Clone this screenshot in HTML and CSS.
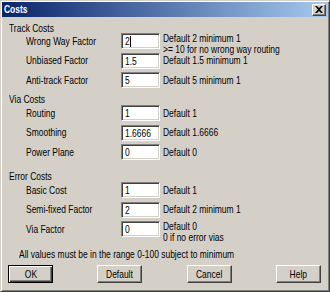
FILE: index.html
```html
<!DOCTYPE html>
<html lang="en">
<head>
	<meta charset="UTF-8">
	<title>Costs</title>
	<link rel="stylesheet" href="styles.css">
</head>
<body>
	<div class="window">
		<div class="titlebar">
			<span class="caption">Costs</span>
			<span class="close">
				<svg width="8" height="7" viewBox="0 0 8 7"><path d="M0 0h2l2 2 2-2h2L5 3.5 8 7H6L4 5 2 7H0l3-3.5z" fill="#000"/></svg>
			</span>
		</div>
		<div class="content">
			<div class="group track">
				<div class="group-title">Track Costs</div>
				<div class="row">
					<span class="label">Wrong Way Factor</span>
					<div class="field"><span class="value">2</span><span class="caret"></span></div>
					<div class="note two">Default 2 minimum 1<br>&gt;= 10 for no wrong way routing</div>
				</div>
				<div class="row">
					<span class="label">Unbiased Factor</span>
					<div class="field"><span class="value">1.5</span></div>
					<div class="note">Default 1.5 minimum 1</div>
				</div>
				<div class="row">
					<span class="label">Anti-track Factor</span>
					<div class="field"><span class="value">5</span></div>
					<div class="note">Default 5 minimum 1</div>
				</div>
			</div>
			<div class="group via">
				<div class="group-title">Via Costs</div>
				<div class="row">
					<span class="label">Routing</span>
					<div class="field"><span class="value">1</span></div>
					<div class="note">Default 1</div>
				</div>
				<div class="row">
					<span class="label">Smoothing</span>
					<div class="field"><span class="value">1.6666</span></div>
					<div class="note">Default 1.6666</div>
				</div>
				<div class="row">
					<span class="label">Power Plane</span>
					<div class="field"><span class="value">0</span></div>
					<div class="note">Default 0</div>
				</div>
			</div>
			<div class="group error">
				<div class="group-title">Error Costs</div>
				<div class="row">
					<span class="label">Basic Cost</span>
					<div class="field"><span class="value">1</span></div>
					<div class="note">Default 1</div>
				</div>
				<div class="row">
					<span class="label">Semi-fixed Factor</span>
					<div class="field"><span class="value">2</span></div>
					<div class="note">Default 2 minimum 1</div>
				</div>
				<div class="row">
					<span class="label">Via Factor</span>
					<div class="field"><span class="value">0</span></div>
					<div class="note two">Default 0<br>0 if no error vias</div>
				</div>
			</div>
			<p class="hint">All values must be in the range 0-100 subject to minimum</p>
			<div class="buttons">
				<button class="btn default-btn"><span>OK</span></button>
				<button class="btn"><span>Default</span></button>
				<button class="btn"><span>Cancel</span></button>
				<button class="btn"><span>Help</span></button>
			</div>
		</div>
	</div>
</body>
</html>
```

FILE: styles.css
```css
* {
	padding: 0;
	margin: 0;
	box-sizing: border-box;
}

body {
	width: 330px;
	height: 292px;
	overflow: hidden;
	font-family: "Liberation Sans", Arial, sans-serif;
	font-size: 11px;
	color: #000;
}

/* the dialog font is narrower than Arial */
.caption, .group-title, .label, .note, .hint, .value, .btn span {
	display: inline-block;
	white-space: nowrap;
	transform: scaleX(0.77);
	transform-origin: 0 50%;
}

.window {
	width: 330px;
	height: 292px;
	background: #d4d0c8;
	border: 1px solid;
	border-color: #d4d0c8 #404040 #404040 #d4d0c8;
	box-shadow: inset 1px 1px #fff, inset -1px -1px #808080;
	padding: 1px;
}

.titlebar {
	height: 15px;
	display: flex;
	align-items: center;
	justify-content: space-between;
	padding: 0 2px 0 2px;
	background: linear-gradient(to right, #0a246a, #a6caf0);
}

.caption {
	color: #fff;
	font-weight: bold;
	line-height: 13px;
}

.close {
	width: 14px;
	height: 12px;
	display: flex;
	align-items: center;
	justify-content: center;
	background: #d4d0c8;
	border: 1px solid;
	border-color: #fff #404040 #404040 #fff;
	box-shadow: inset -1px -1px #808080;
}

.content {
	padding: 6px 7px 0 7px;
}

.group-title {
	display: block;
	height: 11px;
	line-height: 11px;
}

.track .group-title {
	margin-bottom: -1px;
}

.via {
	margin-top: 6px;
}

.error {
	margin-top: 11px;
}

.row {
	display: grid;
	grid-template-columns: 92px 39px auto;
	grid-template-rows: 16px;
	column-gap: 3px;
	height: 16px;
	margin-bottom: 3.5px;
	padding-left: 17px;
	align-items: center;
	line-height: 11px;
}

.row:last-child {
	margin-bottom: 0;
}

.field {
	height: 16px;
	display: flex;
	align-items: flex-start;
	background: #fff;
	border: 1px solid;
	border-color: #808080 #fff #fff #808080;
	box-shadow: inset 1px 1px #404040, inset -1px -1px #d4d0c8;
	padding: 2px 0 0 3px;
	line-height: 11px;
	white-space: nowrap;
}

.caret {
	width: 1px;
	height: 11px;
	margin-left: -1px;
	background: #000;
}

.note.two {
	align-self: start;
}

.hint {
	display: block;
	margin-top: 11px;
	padding-left: 13px;
	line-height: 12px;
}

.buttons {
	display: flex;
	justify-content: space-between;
	margin: 5px 0 0 -1px;
}

.btn {
	width: 45px;
	height: 18px;
	font: inherit;
	color: #000;
	background: #d4d0c8;
	border: 1px solid;
	border-color: #fff #404040 #404040 #fff;
	box-shadow: inset -1px -1px #808080;
}

.btn span {
	transform-origin: 50% 50%;
}

.btn.default-btn {
	border-color: #000;
	box-shadow: inset 1px 1px #fff, inset -1px -1px #404040, inset -2px -2px #808080;
}
```
